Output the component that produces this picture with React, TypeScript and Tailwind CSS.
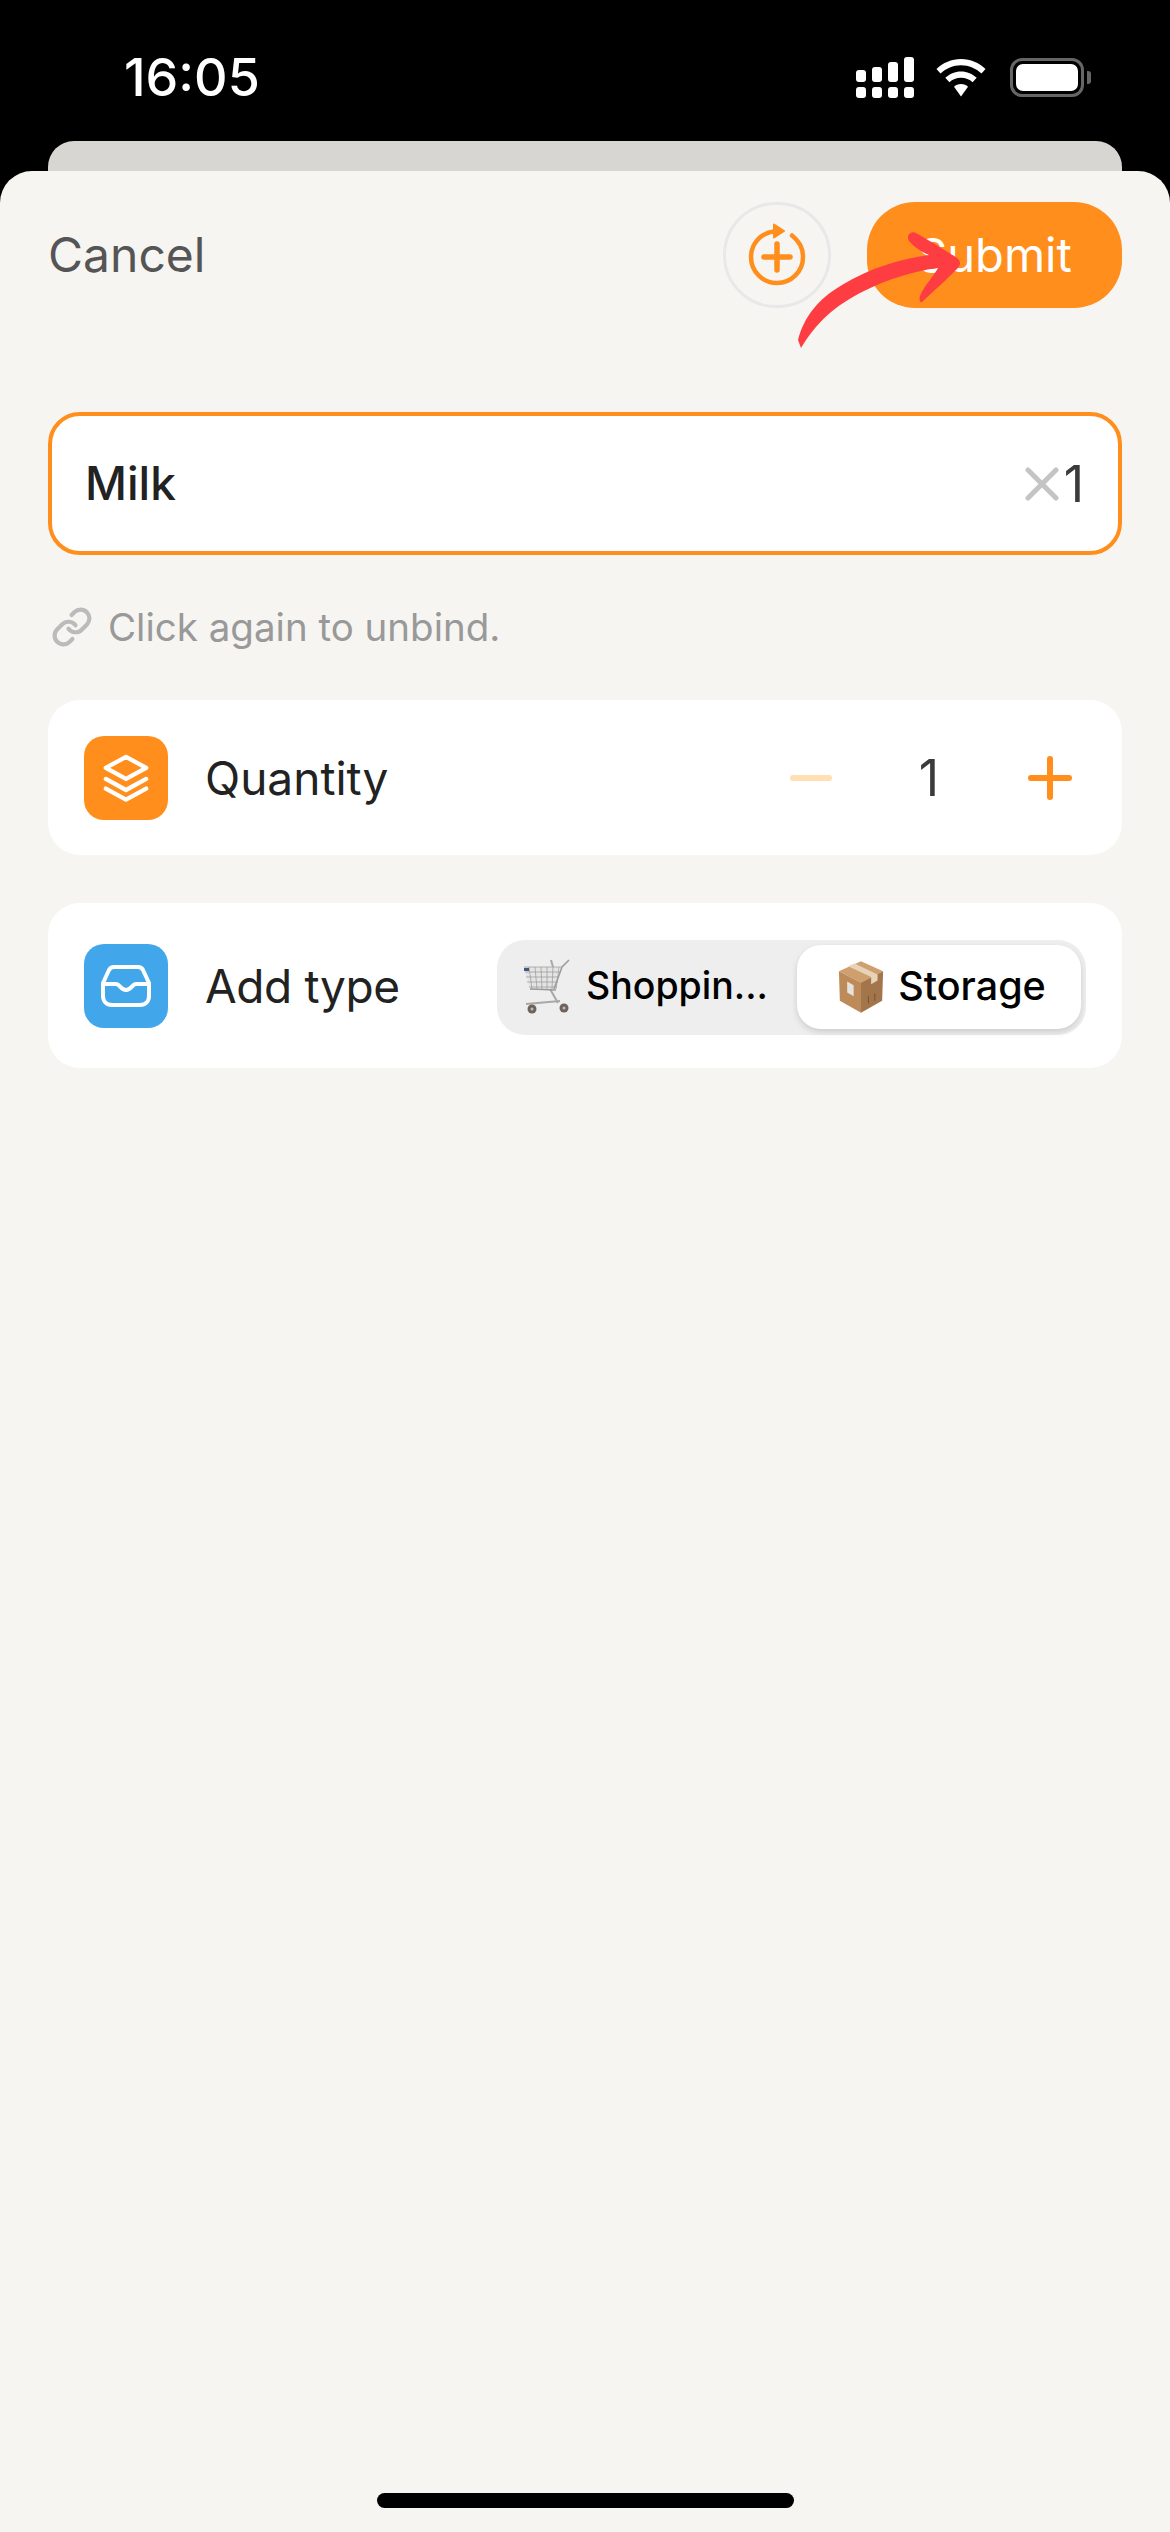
import { Link } from 'lucide-react'

const inter = { fontFamily: 'Inter, sans-serif' }

function StatusIcons() {
  return (
    <div className="flex items-center">
      {/* dual sim signal */}
      <svg width="58" height="41" viewBox="0 0 58 41" fill="#fff" aria-hidden>
        <rect x="0" y="13" width="10" height="12" rx="3" />
        <rect x="16" y="10" width="10" height="15" rx="3" />
        <rect x="32" y="5" width="10" height="20" rx="3" />
        <rect x="48" y="0" width="10" height="25" rx="3" />
        <rect x="0" y="30" width="10" height="11" rx="3" />
        <rect x="16" y="30" width="10" height="11" rx="3" />
        <rect x="32" y="30" width="10" height="11" rx="3" />
        <rect x="48" y="30" width="10" height="11" rx="3" />
      </svg>
      <svg className="ml-[22px]" width="50" height="38" viewBox="0 0 50 38" fill="#fff" aria-hidden>
        <path d="M25 0C15.5 0 7 3.8 0.5 10L4.5 14.5C10 9.3 17.2 6.2 25 6.2S40 9.3 45.5 14.5L49.5 10C43 3.8 34.5 0 25 0Z" />
        <path d="M25 12.5C19 12.5 13.5 14.9 9.3 18.8L13.4 23.3C16.4 20.5 20.5 18.8 25 18.8S33.6 20.5 36.6 23.3L40.7 18.8C36.5 14.9 31 12.5 25 12.5Z" />
        <path d="M25 25C22 25 19.8 26.1 18 27.7L25 37.5L32 27.7C30.2 26.1 28 25 25 25Z" />
      </svg>
      <div className="ml-[24px] flex items-center">
        <div className="h-[39px] w-[74px] rounded-[12px] border-[3px] border-[#666] p-[3px]">
          <div className="h-full w-full rounded-[7px] bg-white" />
        </div>
        <div className="ml-[3px] h-[13px] w-[4px] rounded-r-[3px] bg-[#666]" />
      </div>
    </div>
  )
}

function RetryPlusIcon() {
  return (
    <svg width="64" height="68" viewBox="0 0 64 68" fill="none" stroke="#ff8e1c" strokeLinecap="round" aria-hidden>
      <path d="M47 14.5C53.5 19.5 58 27 58 36C58 50.4 46.4 62 32 62C17.6 62 6 50.4 6 36C6 22.5 16 12 29 10.5" strokeWidth="4.5" />
      <path d="M29 3.5L39 10L29 16.5Z" fill="#ff8e1c" strokeWidth="2" strokeLinejoin="round" />
      <path d="M19 36H45M32 23V49" strokeWidth="5.5" />
    </svg>
  )
}

// hand drawn annotation that sits over the header
function RedArrow() {
  return (
    <svg
      className="absolute left-[792px] top-[225px]"
      width="175"
      height="130"
      viewBox="0 0 175 130"
      fill="#fd3d41"
      aria-hidden
    >
      <path d="M6 115C12 92 26 74 50 60C78 43 108 34 137 30C130 27 122 22 118 17C113 12 118 5 124 8C138 16 156 27 165 33C170 37 168 41 165 44C155 54 142 66 130 77C128 78 127 75 128 71C132 61 141 52 146 43C122 46 96 54 72 66C42 81 24 98 9 123Z" />
    </svg>
  )
}

function CartEmoji() {
  return (
    <svg width="50" height="56" viewBox="0 0 50 56" fill="none" aria-hidden>
      <path d="M2 8H36L33 30H8Z" fill="#e4e4e4" />
      <path
        d="M2 8H40M3 13H38M4 18H37M5 23H36M7 28H35M7 8L10 30M13 8L15 30M19 8L20 30M25 8L25 30M31 8L30 30M37 8L34 30"
        stroke="#979797"
        strokeWidth="0.7"
      />
      <rect x="2" y="9" width="5" height="3" fill="#3c5a80" />
      <path d="M32 30L40 8L47 1" stroke="#9d9d9d" strokeWidth="1.6" />
      <path d="M29 1L31 8M28 30L36 44M4 45L38 42" stroke="#a8a8a8" strokeWidth="2" />
      <path d="M8 30L34 31" stroke="#9a9a9a" strokeWidth="1.5" />
      <circle cx="10" cy="50" r="4.5" fill="#6e635c" />
      <circle cx="10" cy="50" r="1.5" fill="#bbb" />
      <circle cx="42" cy="49" r="4.5" fill="#6e635c" />
      <circle cx="42" cy="49" r="1.5" fill="#bbb" />
    </svg>
  )
}

function BoxEmoji() {
  return (
    <svg width="46" height="52" viewBox="0 0 50 56" aria-hidden>
      <path d="M25 0L49 11L25 23L1 11Z" fill="#cf9f6d" />
      <path d="M1 11L25 23V56L2 43Z" fill="#bd8b59" />
      <path d="M49 11L25 23V56L48 43Z" fill="#a2764a" />
      <path d="M11 5.5L36 17V25L43 21V14.5L18 2.5Z" fill="#e6d3b8" />
      <path d="M10 22L17 26V38L10 34Z" fill="#e5e3de" />
      <path d="M33 38V46M40 35V43" stroke="#6f4f30" strokeWidth="1" />
    </svg>
  )
}

function RowIcon({ bg, children }: { bg: string; children: React.ReactNode }) {
  return (
    <div className={`flex h-[84px] w-[84px] shrink-0 items-center justify-center rounded-[20px] ${bg}`}>
      {children}
    </div>
  )
}

export default function App() {
  return (
    <div className="relative flex h-[2532px] w-[1170px] flex-col overflow-hidden bg-black" style={inter}>
      <div className="flex h-[141px] items-start justify-between pl-[124px] pr-[79px] pt-[52px]">
        <span className="text-[52px] font-medium leading-[52px] text-white">16:05</span>
        <div className="mt-[5px]">
          <StatusIcons />
        </div>
      </div>
      <div className="mx-[48px] h-[30px] rounded-t-[26px] bg-[#d7d6d3]" />

      <div className="flex flex-1 flex-col rounded-t-[32px] bg-[#f6f5f1] px-[48px]">
        <div className="mt-[31px] flex h-[106px] items-center">
          <span className="text-[48px] leading-none text-[#555]">Cancel</span>
          <div className="ml-auto flex h-[106px] w-[108px] items-center justify-center rounded-full border-[3px] border-[#e8e8e8]">
            <RetryPlusIcon />
          </div>
          <div className="ml-[36px] flex h-[106px] w-[255px] items-center justify-center rounded-[48px] bg-[#ff8e1c] text-[47px] text-white">
            Submit
          </div>
        </div>

        <div className="mt-[104px] flex h-[143px] items-center rounded-[32px] border-[4px] border-[#ff8e1c] bg-white pl-[33px] pr-[34px]">
          <span className="pb-[2px] text-[46px] font-medium leading-none text-[#222]">Milk</span>
          <svg className="ml-auto" width="34" height="34" viewBox="0 0 34 34" stroke="#c4c4c4" strokeWidth="5" strokeLinecap="round" aria-hidden>
            <path d="M3 3L31 31M31 3L3 31" />
          </svg>
          <span className="ml-[5px] text-[50px] leading-none text-[#3b3b3b]">1</span>
        </div>

        <div className="mt-[50px] flex h-[44px] items-center">
          <Link className="ml-[3px] text-[#bbb]" size={42} strokeWidth={2.4} />
          <span className="ml-[15px] text-[38.5px] leading-none text-[#999]">Click again to unbind.</span>
        </div>

        <div className="mt-[51px] flex h-[155px] items-center rounded-[32px] bg-white pl-[36px] pr-[50px]">
          <RowIcon bg="bg-[#ff8e1c]">
            <svg width="50" height="52" viewBox="0 0 52 52" fill="none" stroke="#fff" strokeWidth="4.5" strokeLinecap="round" strokeLinejoin="round" aria-hidden>
              <path d="M26 4L47 15.5L26 27L5 15.5Z" />
              <path d="M5 27L26 38.5L47 27" />
              <path d="M5 37L26 48.5L47 37" />
            </svg>
          </RowIcon>
          <span className="ml-[37px] text-[46px] leading-none text-[#222]">Quantity</span>
          <div className="ml-auto h-[6px] w-[42px] rounded-full bg-[#ffdfb3]" />
          <span className="ml-[86px] w-[22px] text-center text-[50px] leading-none text-[#3b3b3b]">1</span>
          <svg className="ml-[88px]" width="44" height="44" viewBox="0 0 44 44" stroke="#ff8e1c" strokeWidth="6" strokeLinecap="round" aria-hidden>
            <path d="M3 22H41M22 3V41" />
          </svg>
        </div>

        <div className="mt-[48px] flex h-[165px] items-center rounded-[32px] bg-white pl-[36px] pr-[36px]">
          <RowIcon bg="bg-[#42a7ea]">
            <svg width="50" height="42" viewBox="0 0 50 42" fill="none" stroke="#fff" strokeWidth="4" strokeLinecap="round" strokeLinejoin="round" aria-hidden>
              <path d="M13 2H37C39.5 2 41 3 42 5L48 18V31C48 36.5 44.5 40 39 40H11C5.500 40 2 36.5 2 31V18L8 5C9 3 10.5 2 13 2Z" />
              <path d="M2 19H15C19 19 19.5 25 25 25C30.5 25 31 19 35 19H48" />
            </svg>
          </RowIcon>
          <span className="ml-[37px] text-[46px] leading-none tracking-[-0.4px] text-[#222]">Add type</span>
          <div className="ml-auto mt-[3px] flex h-[95px] w-[589px] rounded-[28px] bg-[#eeeeee] p-[5px] pb-[6px]">
            <div className="flex flex-1 items-center gap-[14px] pl-[20px] text-[37.5px] font-medium text-black">
              <CartEmoji />
              <span>Shoppin...</span>
            </div>
            <div className="flex w-[284px] items-center justify-center gap-[14px] rounded-[24px] bg-white pl-[6px] text-[39.5px] font-medium text-black shadow-[0_3px_6px_rgba(0,0,0,0.14)]">
              <BoxEmoji />
              <span>Storage</span>
            </div>
          </div>
        </div>

        <div className="mb-[24px] mt-auto h-[15px] w-[417px] self-center rounded-full bg-black" />
      </div>

      <RedArrow />
    </div>
  )
}
